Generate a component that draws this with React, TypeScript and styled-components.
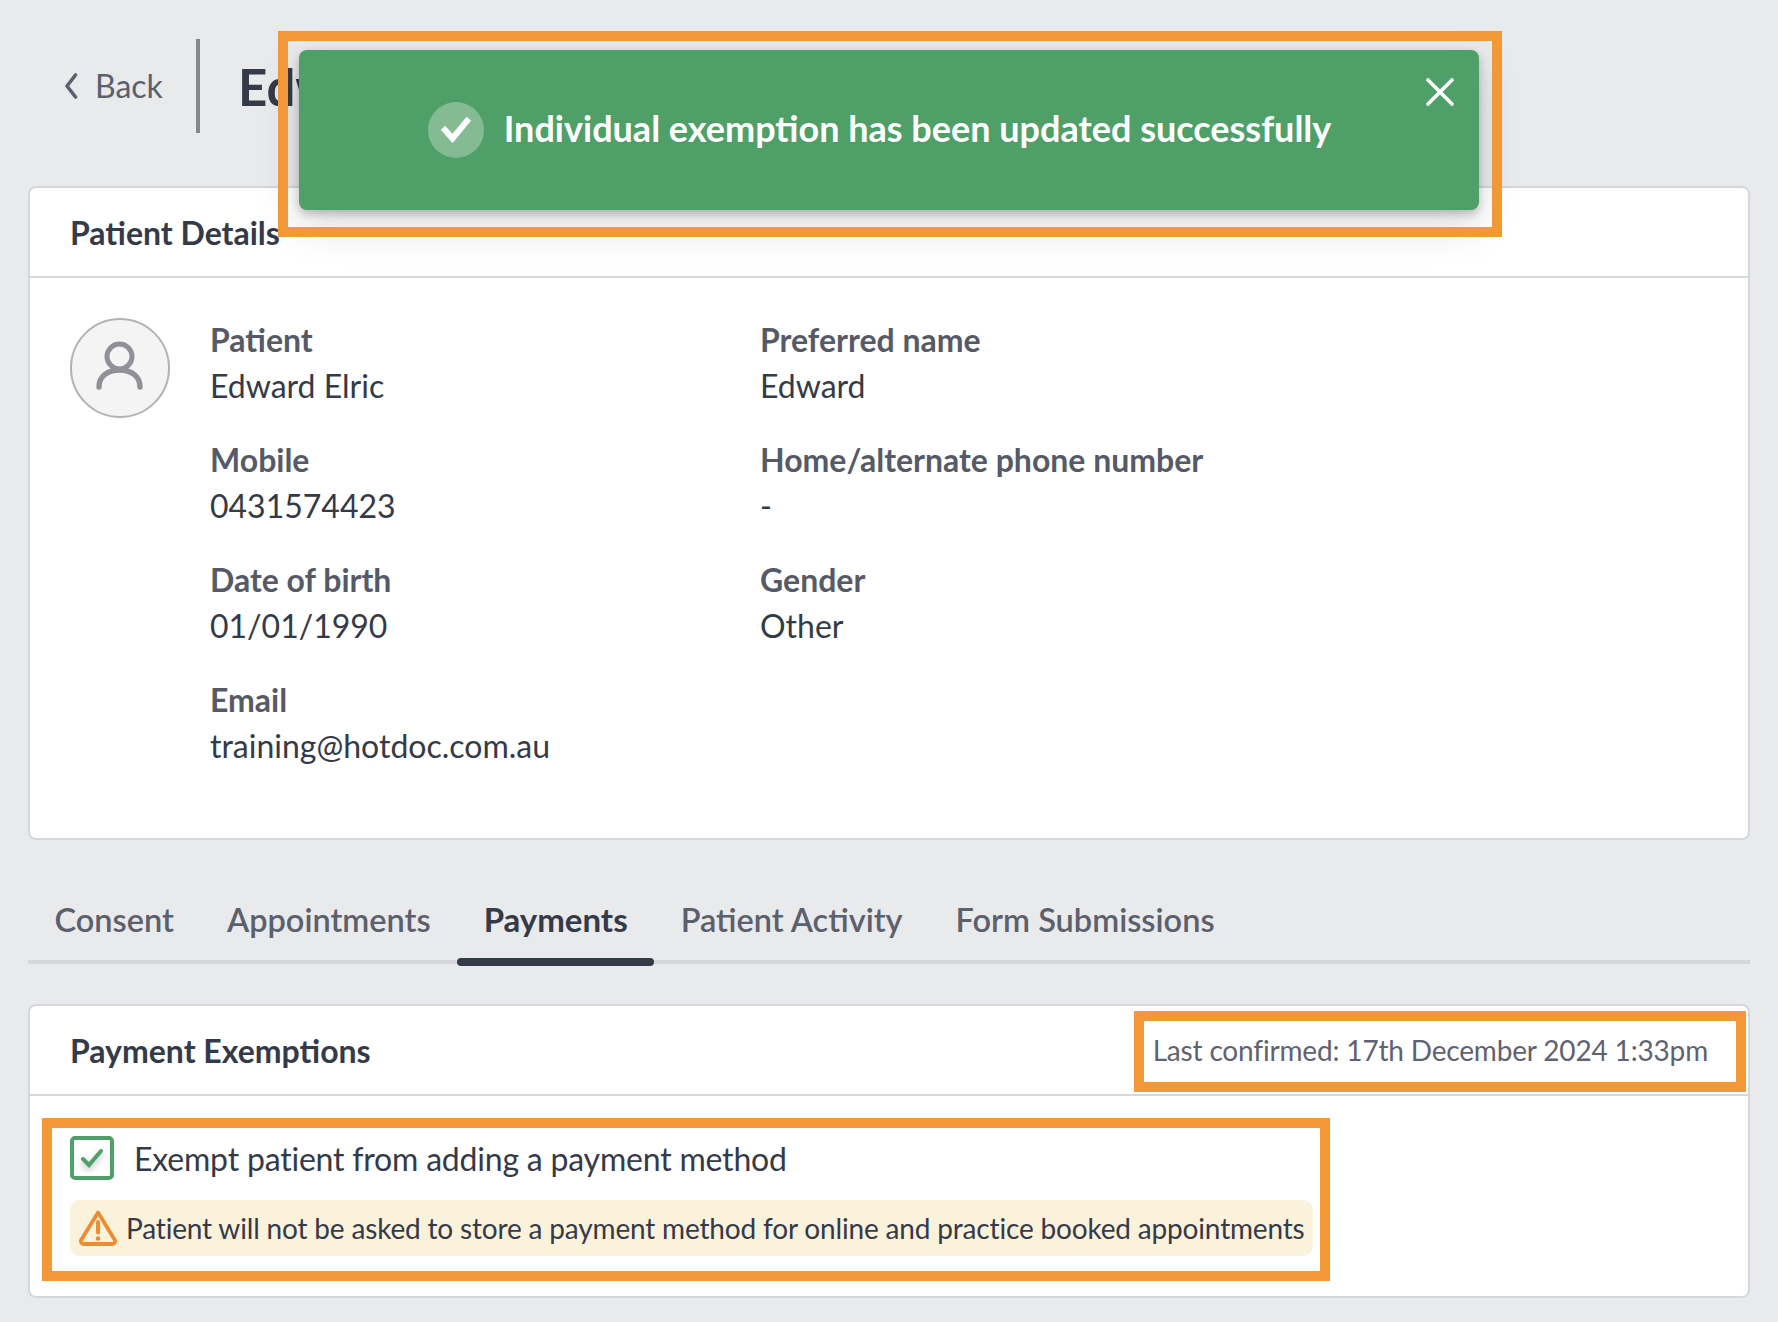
import React from "react";
import styled, { createGlobalStyle } from "styled-components";

const Global = createGlobalStyle`
  html, body { margin: 0; padding: 0; background: #e9eaec; }
  body { font-family: Lato, "Liberation Sans", sans-serif; color: #343a48; overflow: hidden; }
  * { box-sizing: border-box; }
`;

const Page = styled.div`
  position: relative;
  width: 1778px;
  height: 1322px;
  padding: 39px 28px 0;
`;

const TopBar = styled.header`
  display: flex;
  align-items: stretch;
  height: 94px;
  margin-bottom: 53px;
`;

const BackLink = styled.div`
  display: flex;
  align-items: center;
  gap: 17px;
  width: 172px;
  padding: 0 0 1px 36px;
  font-size: 32px;
  color: #5c606d;
  border-right: 4px solid #85878f;
`;

const Title = styled.h1`
  margin: 0 0 0 38px;
  align-self: center;
  font-size: 51px;
  font-weight: 700;
  color: #343a48;
  white-space: nowrap;
`;

const Card = styled.section`
  background: #fff;
  border: 2px solid #d6d7da;
  border-radius: 8px;
`;

const CardHeader = styled.div`
  display: flex;
  align-items: center;
  justify-content: space-between;
  height: 90px;
  padding: 0 40px;
  border-bottom: 2px solid #d6d7da;
`;

const CardTitle = styled.h2`
  margin: 0;
  font-size: 32px;
  font-weight: 700;
  color: #343a48;
`;

const Confirmed = styled.span`
  font-size: 28px;
  letter-spacing: -0.17px;
  color: #5f6270;
`;

const DetailsBody = styled.div`
  display: flex;
  gap: 40px;
  padding: 40px 40px 69px;
`;

const Avatar = styled.div`
  flex: none;
  display: flex;
  align-items: center;
  justify-content: center;
  width: 100px;
  height: 100px;
  background: #f4f4f5;
  border: 2px solid #b2b3b7;
  border-radius: 50%;
`;

const FieldGrid = styled.dl`
  display: grid;
  flex: 1;
  grid-template-columns: 550px 1fr;
  row-gap: 28px;
  margin: -1px 0 0;
`;

const Field = styled.div`
  font-size: 32px;
  line-height: 46px;
`;

const FieldLabel = styled.dt`
  font-weight: 700;
  color: #565a67;
`;

const FieldValue = styled.dd`
  margin: 0;
  color: #343a48;
`;

const Tabs = styled.nav`
  display: flex;
  height: 124px;
  margin-bottom: 40px;
  border-bottom: 4px solid #d6d7da;
`;

const Tab = styled.div<{ $active?: boolean }>`
  position: relative;
  display: flex;
  align-items: center;
  padding: 38px 26.5px 0;
  height: 120px;
  font-size: ${(p) => (p.$active ? 33 : 32.5)}px;
  font-weight: ${(p) => (p.$active ? 700 : 600)};
  color: ${(p) => (p.$active ? "#343a48" : "#5c606d")};

  ${(p) =>
    p.$active &&
    `&::after {
      content: "";
      position: absolute;
      left: 0;
      right: 0;
      bottom: -6px;
      height: 8px;
      border-radius: 4px;
      background: #343a48;
    }`}
`;

const PaymentBody = styled.div`
  padding: 40px 40px 40px;
`;

const CheckRow = styled.label`
  display: flex;
  align-items: center;
  gap: 20px;
  font-size: 32px;
  letter-spacing: -0.2px;
  color: #343a48;
`;

const CheckBox = styled.span`
  flex: none;
  display: flex;
  align-items: center;
  justify-content: center;
  width: 44px;
  height: 44px;
  border: 4px solid #4fa068;
  border-radius: 5px;
`;

const Notice = styled.div`
  display: flex;
  align-items: center;
  gap: 9px;
  height: 56px;
  width: 1243px;
  margin-top: 20px;
  padding: 0 9px;
  background: #fbf2dc;
  border-radius: 10px;
  font-size: 28px;
  letter-spacing: -0.17px;
  color: #343a48;
  white-space: nowrap;

  svg {
    flex: none;
  }
`;

const Toast = styled.div`
  position: absolute;
  left: 299px;
  top: 50px;
  display: flex;
  align-items: center;
  justify-content: center;
  gap: 20px;
  width: 1180px;
  height: 160px;
  padding-right: 19px;
  background: #4fa068;
  border-radius: 8px;
  box-shadow: 0 4px 8px rgba(0, 0, 0, 0.22), 0 16px 44px rgba(0, 0, 0, 0.14);
  color: #fff;
  font-size: 36px;
  font-weight: 700;
  white-space: nowrap;
`;

const ToastText = styled.span`
  margin-bottom: 4px;
`;

const ToastIcon = styled.span`
  flex: none;
  display: flex;
  align-items: center;
  justify-content: center;
  width: 56px;
  height: 56px;
  border-radius: 50%;
  background: #84bb93;
`;

const ToastClose = styled.span`
  position: absolute;
  top: 28px;
  right: 25px;
  display: flex;
  width: 28px;
  height: 28px;
`;

const Mark = styled.div<{ $l: number; $t: number; $w: number; $h: number }>`
  position: absolute;
  left: ${(p) => p.$l}px;
  top: ${(p) => p.$t}px;
  width: ${(p) => p.$w}px;
  height: ${(p) => p.$h}px;
  border: 10px solid #f29836;
  pointer-events: none;
`;

const fields = [
  ["Patient", "Edward Elric"],
  ["Preferred name", "Edward"],
  ["Mobile", "0431574423"],
  ["Home/alternate phone number", "-"],
  ["Date of birth", "01/01/1990"],
  ["Gender", "Other"],
  ["Email", "training@hotdoc.com.au"],
];

const tabs = ["Consent", "Appointments", "Payments", "Patient Activity", "Form Submissions"];

export default function App() {
  return (
    <Page>
      <Global />
      <TopBar>
        <BackLink>
          <svg width="14" height="26" viewBox="0 0 14 26" fill="none">
            <path d="M11.5 2 3 13l8.5 11" stroke="#5c606d" strokeWidth="3.6" strokeLinecap="round" strokeLinejoin="round" />
          </svg>
          Back
        </BackLink>
        <Title>Edward Elric</Title>
      </TopBar>

      <Card>
        <CardHeader>
          <CardTitle>Patient Details</CardTitle>
        </CardHeader>
        <DetailsBody>
          <Avatar>
            <svg width="50" height="56" viewBox="0 0 50 56" fill="none">
              <circle cx="24.5" cy="16.5" r="12.5" stroke="#8f9196" strokeWidth="5" />
              <path d="M4 47c0-11 9-17 20.5-17S45 36 45 47" stroke="#8f9196" strokeWidth="5.4" strokeLinecap="round" />
            </svg>
          </Avatar>
          <FieldGrid>
            {fields.map(([label, value]) => (
              <Field key={label}>
                <FieldLabel>{label}</FieldLabel>
                <FieldValue>{value}</FieldValue>
              </Field>
            ))}
          </FieldGrid>
        </DetailsBody>
      </Card>

      <Tabs>
        {tabs.map((t) => (
          <Tab key={t} $active={t === "Payments"}>
            {t}
          </Tab>
        ))}
      </Tabs>

      <Card>
        <CardHeader>
          <CardTitle>Payment Exemptions</CardTitle>
          <Confirmed>Last confirmed: 17th December 2024 1:33pm</Confirmed>
        </CardHeader>
        <PaymentBody>
          <CheckRow>
            <CheckBox>
              <svg width="24" height="20" viewBox="0 0 24 20" fill="none" style={{ filter: "drop-shadow(0 3px 3px rgba(0,0,0,.25))" }}>
                <path d="M3 11l6 6L21 3" stroke="#4fa068" strokeWidth="4" strokeLinecap="round" strokeLinejoin="miter" />
              </svg>
            </CheckBox>
            Exempt patient from adding a payment method
          </CheckRow>
          <Notice>
            <svg width="38" height="36" viewBox="0 0 38 36" fill="none">
              <path d="M19 2.5 35.5 29.5a2.8 2.8 0 0 1-2.4 4.5H4.9a2.8 2.8 0 0 1-2.4-4.5L19 2.5Z" stroke="#ec8d33" strokeWidth="3.8" strokeLinejoin="round" />
              <path d="M19 12v10.5" stroke="#ec8d33" strokeWidth="4" strokeLinecap="round" />
              <circle cx="19" cy="28.5" r="2.3" fill="#ec8d33" />
            </svg>
            Patient will not be asked to store a payment method for online and practice booked appointments
          </Notice>
        </PaymentBody>
      </Card>

      <Toast>
        <ToastIcon>
          <svg width="30" height="26" viewBox="0 0 30 26" fill="none">
            <path d="M4 13l7.5 8.5L26 4" stroke="#fff" strokeWidth="6" strokeLinecap="square" strokeLinejoin="miter" />
          </svg>
        </ToastIcon>
        <ToastText>Individual exemption has been updated successfully</ToastText>
        <ToastClose>
          <svg width="28" height="28" viewBox="0 0 28 28" fill="none">
            <path d="M2 2l24 24M26 2 2 26" stroke="#fff" strokeWidth="3.6" strokeLinecap="round" />
          </svg>
        </ToastClose>
      </Toast>

      <Mark $l={278} $t={31} $w={1224} $h={206} />
      <Mark $l={1134} $t={1011} $w={612} $h={81} />
      <Mark $l={42} $t={1118} $w={1288} $h={163} />
    </Page>
  );
}
